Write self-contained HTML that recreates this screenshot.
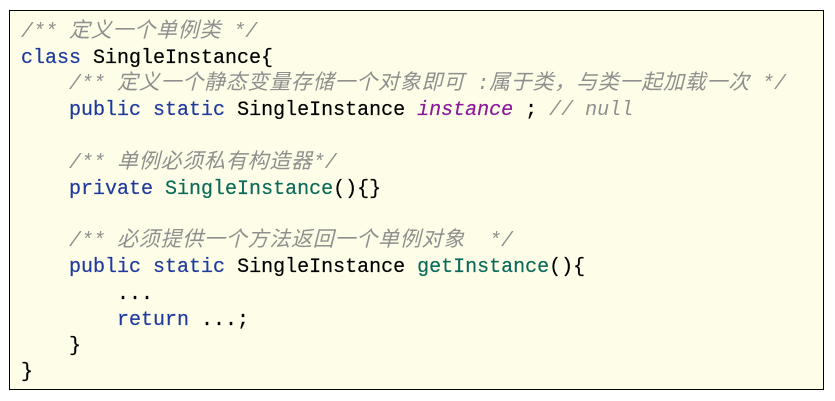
<!DOCTYPE html>
<html><head><meta charset="utf-8"><style>
html,body{margin:0;padding:0;background:#fff;width:835px;height:401px;overflow:hidden}
.box{position:absolute;left:9px;top:10px;width:815px;height:380px;border:1px solid #000;background:#fefee8;box-sizing:border-box}
pre{margin:0;position:absolute;left:11px;top:9px;font-family:"Liberation Mono","Noto Sans CJK SC",monospace;font-size:20px;line-height:26.15px;color:#000;-webkit-text-stroke:0.2px}
.k{color:#1f3a9e}
.cm{color:#8f8f8f;font-style:italic;-webkit-text-stroke:0}
.z{font-size:21px;letter-spacing:0.75px;line-height:20px}
.f{color:#8b1a9b;font-style:italic}
.m{color:#0a6a5a}
</style></head><body>
<div class="box"><pre><span class="cm">/** <span class="z">定义一个单例类</span> */</span>
<span class="k">class</span> SingleInstance{
    <span class="cm">/** <span class="z">定义一个静态变量存储一个对象即可</span> :<span class="z">属于类，与类一起加载一次</span> */</span>
    <span class="k">public</span> <span class="k">static</span> SingleInstance <span class="f">instance</span> ; <span class="cm">// null</span>

    <span class="cm">/** <span class="z">单例必须私有构造器</span>*/</span>
    <span class="k">private</span> <span class="m">SingleInstance</span>(){}

    <span class="cm">/** <span class="z">必须提供一个方法返回一个单例对象</span>  */</span>
    <span class="k">public</span> <span class="k">static</span> SingleInstance <span class="m">getInstance</span>(){
        ...
        <span class="k">return</span> ...;
    }
}</pre></div>
</body></html>
